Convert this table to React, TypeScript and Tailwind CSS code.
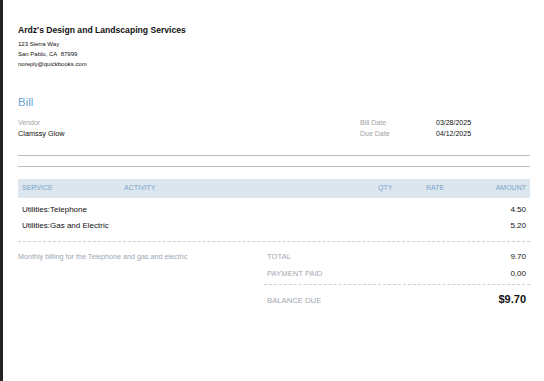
import React from 'react';

const lines = [
    { service: 'Utilities:Telephone', amount: '4.50' },
    { service: 'Utilities:Gas and Electric', amount: '5.20' },
];

const BillDoc: React.FC = () => {
    return (
        <div className="flex h-[381px] w-[544px] bg-white font-['Liberation_Sans',Arial,sans-serif] text-[#111]">
            <div className="w-[3px] shrink-0 bg-[#222]"></div>
            <div className="flex-1 pl-[15px] pr-[11px]">
                <div className="w-[512px]">
                    <h1 className="pt-[25px] text-[8.6px] font-bold leading-[10px]">Ardz's Design and Landscaping Services</h1>
                    <div className="mt-[4px] text-[6px] leading-[10px]">
                        <p>123 Sierra Way</p>
                        <p>San Pablo, CA&nbsp; 87999</p>
                        <p>noreply@quickbooks.com</p>
                    </div>

                    <h2 className="mt-[26px] text-[11.5px] leading-[14px] text-[#6da3d3]">Bill</h2>

                    <div className="mt-[8px] flex text-[7px] leading-[11px]">
                        <div className="flex-1">
                            <p className="text-[#a3a3a3]">Vendor</p>
                            <p className="text-[7.3px]">Clamssy Glow</p>
                        </div>
                        <div className="grid w-[170px] grid-cols-[76px_1fr]">
                            <span className="text-[#a3a3a3]">Bill Date</span>
                            <span>03/28/2025</span>
                            <span className="text-[#a3a3a3]">Due Date</span>
                            <span>04/12/2025</span>
                        </div>
                    </div>

                    <div className="mt-[16px] h-px bg-[#bcbcbc]"></div>
                    <div className="mt-[10px] h-px bg-[#bcbcbc]"></div>

                    <div className="mt-[12px] flex h-[19px] items-center bg-[#dce6ef] px-[4px] text-[7px] text-[#79a3c8]">
                        <span className="w-[102px]">SERVICE</span>
                        <span className="flex-1">ACTIVITY</span>
                        <span className="w-[48px]">QTY</span>
                        <span className="w-[60px]">RATE</span>
                        <span className="w-[40px] text-right">AMOUNT</span>
                    </div>

                    <div className="mt-[4px] px-[4px] text-[8px] leading-[16px]">
                        {lines.map((l) => (
                            <div key={l.service} className="flex justify-between">
                                <span>{l.service}</span>
                                <span>{l.amount}</span>
                            </div>
                        ))}
                    </div>

                    <div className="mt-[7px] border-t border-dashed border-[#cfcfcf]"></div>

                    <div className="flex">
                        <p className="mt-[9px] flex-1 text-[7.2px] leading-[12px] text-[#9aa6b4]">Monthly billing for the Telephone and gas and electric</p>
                        <div className="w-[266px]">
                            <div className="mt-[6px] pl-[3px] pr-[4px] leading-[17px]">
                                <div className="flex justify-between">
                                    <span className="text-[7.7px] text-[#a2a9b3]">TOTAL</span>
                                    <span className="text-[8px]">9.70</span>
                                </div>
                                <div className="flex justify-between">
                                    <span className="text-[7.7px] text-[#a2a9b3]">PAYMENT PAID</span>
                                    <span className="text-[8px]">0.00</span>
                                </div>
                            </div>
                            <div className="mt-[2px] border-t border-dashed border-[#cfcfcf]"></div>
                            <div className="mt-[7px] flex items-baseline justify-between pl-[3px] pr-[4px] leading-[15px]">
                                <span className="text-[7.7px] text-[#a2a9b3]">BALANCE DUE</span>
                                <span className="text-[11px] font-bold">$9.70</span>
                            </div>
                        </div>
                    </div>
                </div>
            </div>
        </div>
    );
};

export default function App() {
    return <BillDoc />;
}
